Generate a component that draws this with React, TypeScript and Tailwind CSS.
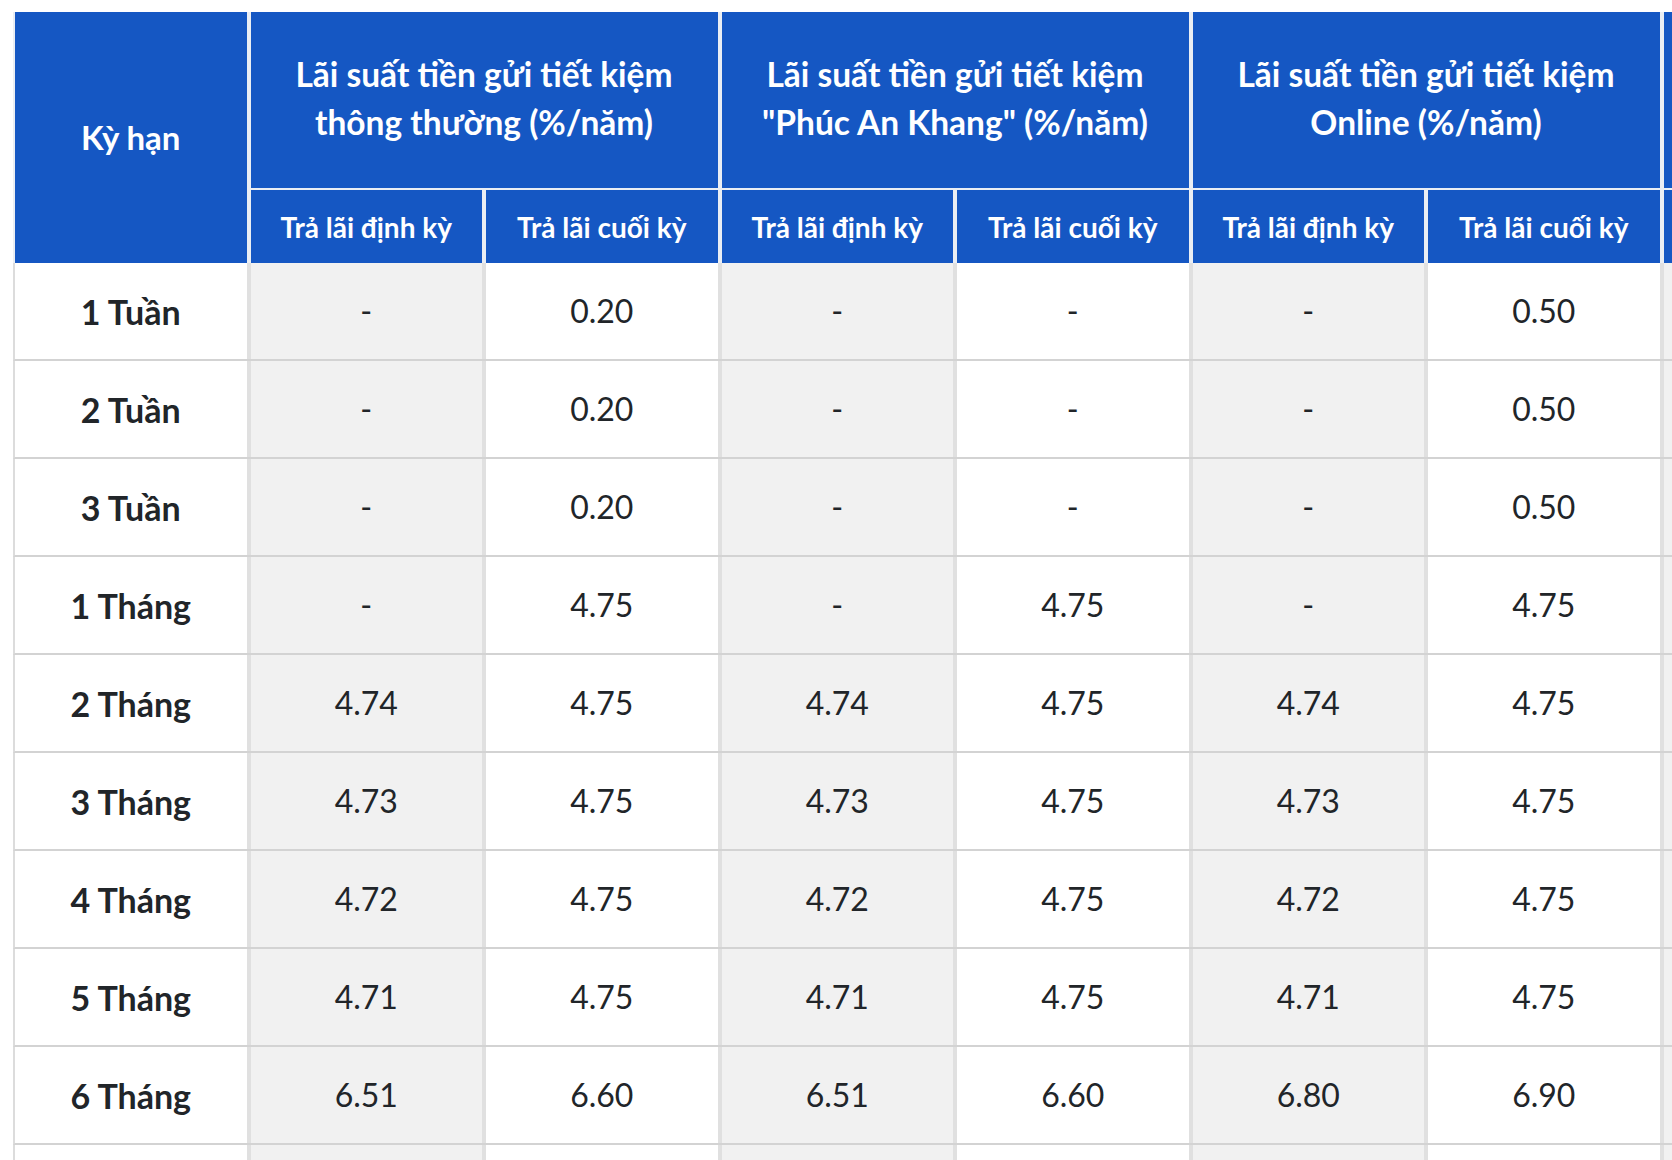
import React from 'react';

const ROWS: { term: string; values: string[] }[] = [
  { term: '1 Tuần', values: ['-', '0.20', '-', '-', '-', '0.50', ''] },
  { term: '2 Tuần', values: ['-', '0.20', '-', '-', '-', '0.50', ''] },
  { term: '3 Tuần', values: ['-', '0.20', '-', '-', '-', '0.50', ''] },
  { term: '1 Tháng', values: ['-', '4.75', '-', '4.75', '-', '4.75', ''] },
  { term: '2 Tháng', values: ['4.74', '4.75', '4.74', '4.75', '4.74', '4.75', ''] },
  { term: '3 Tháng', values: ['4.73', '4.75', '4.73', '4.75', '4.73', '4.75', ''] },
  { term: '4 Tháng', values: ['4.72', '4.75', '4.72', '4.75', '4.72', '4.75', ''] },
  { term: '5 Tháng', values: ['4.71', '4.75', '4.71', '4.75', '4.71', '4.75', ''] },
  { term: '6 Tháng', values: ['6.51', '6.60', '6.51', '6.60', '6.80', '6.90', ''] },
  // row below the fold, only its top edge shows
  { term: '', values: ['', '', '', '', '', '', ''] },
];

const GROUPS: [string, string][] = [
  ['Lãi suất tiền gửi tiết kiệm', 'thông thường (%/năm)'],
  ['Lãi suất tiền gửi tiết kiệm', '"Phúc An Khang" (%/năm)'],
  ['Lãi suất tiền gửi tiết kiệm', 'Online (%/năm)'],
];

export default function App() {
  return (
    <div className="w-[1672px] h-[1160px] overflow-hidden bg-white pt-[12px] font-['Lato','Noto_Sans',sans-serif]">
      <div className="ml-[13px] w-max">
        <div className="grid grid-cols-[repeat(9,231.5px)] grid-rows-[176px_73px] gap-x-[4px] gap-y-[2px] bg-[#eaeef4] border-l-2 border-l-[#eaeef4] text-white font-bold">
          <div className="row-span-2 bg-[#1557c3] flex items-center justify-center text-[33px]">
            Kỳ hạn
          </div>
          {GROUPS.map((g, i) => (
            <div
              key={i}
              className="col-span-2 bg-[#1557c3] flex flex-col items-center justify-center text-[33.5px] leading-[48px] text-center pb-[4px]"
            >
              <span>{g[0]}</span>
              <span>{g[1]}</span>
            </div>
          ))}
          {/* next group, scrolled off to the right */}
          <div className="col-span-2 bg-[#1557c3]" />
          {GROUPS.map((_, i) => (
            <React.Fragment key={i}>
              <div className="bg-[#1557c3] flex items-center justify-center text-[28px]">Trả lãi định kỳ</div>
              <div className="bg-[#1557c3] flex items-center justify-center text-[28px]">Trả lãi cuối kỳ</div>
            </React.Fragment>
          ))}
          <div className="bg-[#1557c3]" />
          <div className="bg-[#1557c3]" />
        </div>

        {ROWS.map((row, r) => (
          <div
            key={r}
            className="grid grid-cols-[repeat(9,231.5px)] gap-x-[4px] bg-[#e0e0e0] border-l-2 border-l-[#dcdcdc] border-b-2 border-b-[#d3d3d3] text-[#212529]"
          >
            <div className="h-[96px] bg-white flex items-center justify-center text-[34px] font-bold">
              {row.term}
            </div>
            {row.values.map((v, i) => (
              <div
                key={i}
                className={
                  i % 2 === 0
                    ? 'h-[96px] bg-[#f1f1f1] flex items-center justify-center text-[32px]'
                    : 'h-[96px] bg-white flex items-center justify-center text-[32px]'
                }
              >
                {v}
              </div>
            ))}
            <div className="h-[96px] bg-white" />
          </div>
        ))}
      </div>
    </div>
  );
}
